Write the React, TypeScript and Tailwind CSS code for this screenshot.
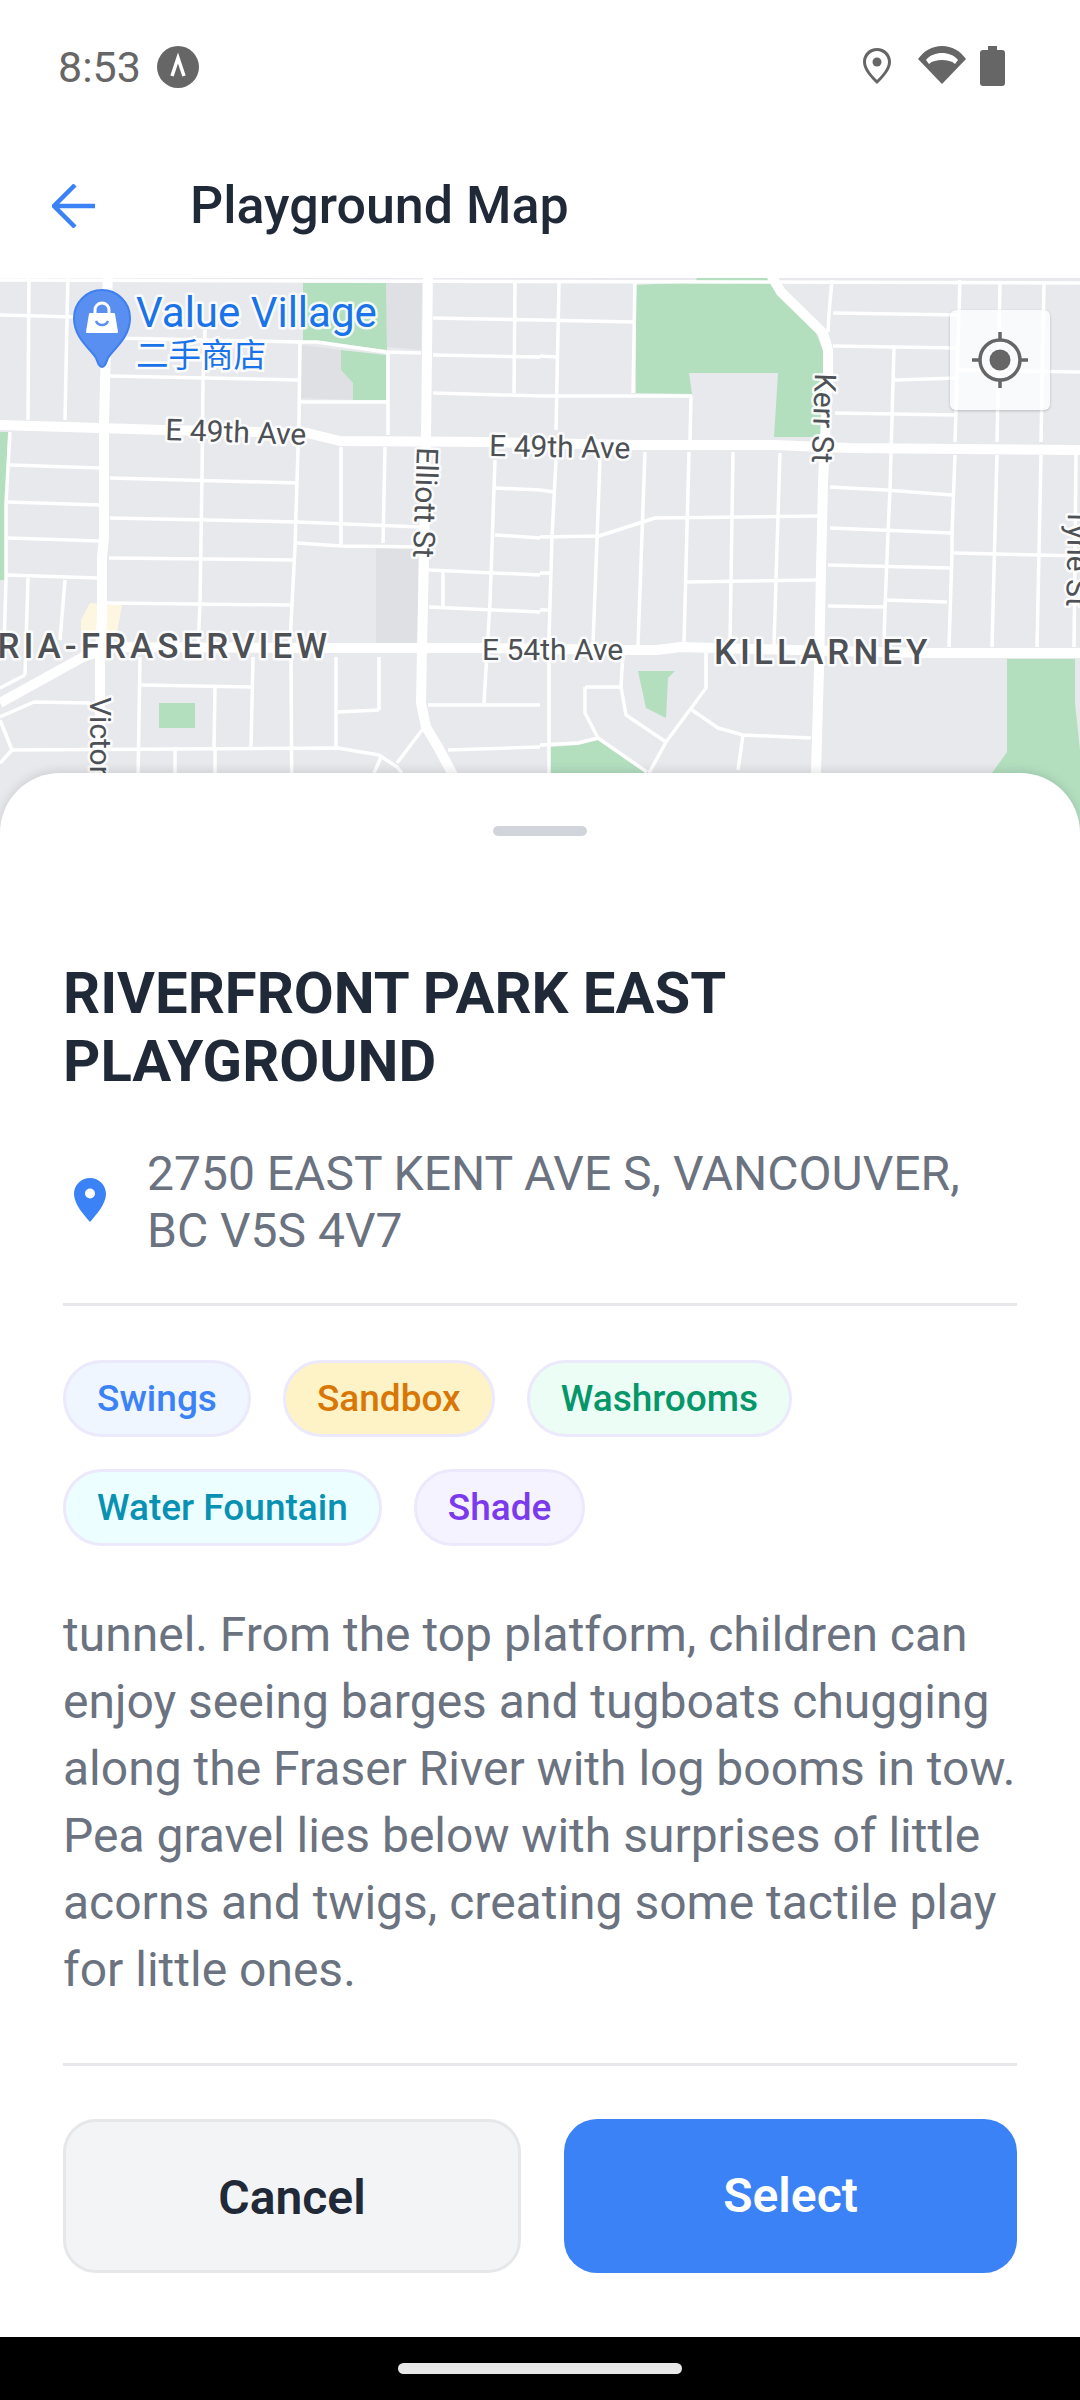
const majorRoads = [
  '108,270 104,423 104,537 102,557 102,617 100,657 100,840',
  '0,425 165,430 307,433 340,441 490,442 633,445 761,445 774,445 850,448 1080,450',
  '97,647 328,648 483,648 623,650 657,650 681,647 714,648 926,653 1080,653',
  '97,652 83,657 0,703',
  '428,270 426,437 424,557 422,647 421,703 426,727 438,747 452,773 470,840',
  '768,270 781,292 823,333 828,350 828,373 823,483 821,570 819,670 814,840',
];

const minorRoads = [
  '29,270 28,420', '68,270 65,420', '205,330 203,380 202,477 200,603 198,647',
  '300,342 299,420 298,450 297,480 295,547 290,643', '291,653 292,840', '388,353 388,435',
  '341,447 341,547', '385,447 383,543', '515,283 514,393', '495,460 490,603 484,703',
  '443,572 443,607', '10,432 6,503 6,580 4,647', '28,578 25,675', '65,580 60,640',
  '140,657 137,840', '215,687 214,747', '253,657 251,747', '336,657 336,747', '379,657 379,710',
  '175,747 175,840', '215,747 215,840', '0,315 76,317', '110,338 300,342 317,342 386,352 421,353',
  '110,376 298,380', '300,402 388,402', '10,465 100,468', '8,502 100,505', '8,538 100,541',
  '7,575 98,578', '110,478 297,483', '110,518 297,522 421,527', '297,543 341,546 421,547',
  '109,558 293,560', '107,603 290,605', '433,318 540,320', '433,355 540,357', '433,393 540,396',
  '495,488 540,490', '495,535 540,538', '429,570 540,575', '429,607 540,612', '428,705 540,705',
  '141,685 252,687', '0,717 34,702 90,703', '0,720 12,750 338,748 379,755 397,767 402,773',
  '12,750 0,763', '338,712 379,710', '397,763 422,730', '381,757 374,773', '448,750 540,747',
  '0,688 25,675', '0,280 1080,283',
  '559,283 556,430', '556,460 552,537 549,637 549,840', '635,283 633,393', '540,320 633,322',
  '540,356 557,357', '540,396 692,396', '691,396 690,440', '645,452 638,645', '600,460 593,645',
  '689,452 684,643', '733,452 730,645', '780,453 774,645', '540,490 554,492',
  '540,537 599,536 655,518 818,516', '687,582 816,580', '540,573 550,573', '540,610 550,610',
  '832,280 829,313 828,332', '833,313 959,315', '833,346 957,348', '957,370 1080,372',
  '894,348 890,490 888,533 885,607 884,645', '895,380 959,378', '835,413 955,415',
  '960,280 955,442', '955,455 952,533 952,553 949,647', '1000,283 997,442', '997,455 992,647',
  '1044,283 1041,442', '1041,455 1037,647', '1076,455 1074,647', '830,487 885,490 952,495',
  '830,528 952,533', '828,565 950,568', '828,606 885,607', '885,600 947,602', '954,553 1080,556',
  '623,653 621,687 626,715 666,742 649,773', '585,687 621,687', '585,687 585,713 598,738 647,772',
  '540,745 578,743 598,738', '706,653 706,688 666,742', '692,710 718,728 743,735 811,738',
  '743,735 738,770',
];

const parks = [
  '303,283 386,283 387,350 319,341 303,341',
  '341,350 386,355 386,400 353,400 353,383 341,370',
  '0,432 8,432 5,503 5,580 0,580',
  '159,703 195,703 195,728 159,728',
  '636,285 695,282 697,278 768,278 778,293 816,333 823,350 824,437 774,437 778,373 689,373 692,394 636,393',
  '638,671 675,671 668,678 666,718 646,708',
  '1007,659 1075,659 1075,703 1080,750 1080,840 970,840 992,773 1007,752',
  '550,747 578,745 598,740 644,772 660,840 550,840',
];

const buildings = [
  '386,283 422,283 421,350 387,347',
  '302,345 341,350 341,370 353,383 353,400 300,398',
  '376,548 418,548 418,643 376,643',
];

const tags = [
  { label: 'Swings', box: 'bg-[#eff6ff]', text: 'text-[#3b82f6]' },
  { label: 'Sandbox', box: 'bg-[#fef3c7]', text: 'text-[#d97706]' },
  { label: 'Washrooms', box: 'bg-[#ecfdf5]', text: 'text-[#059669]' },
  { label: 'Water Fountain', box: 'bg-[#ecfeff]', text: 'text-[#0891b2]' },
  { label: 'Shade', box: 'bg-[#f5f3ff]', text: 'text-[#7c3aed]' },
];

function MapLabel({ x, y, rotate = 0, size = 30, spacing = 0, weight = 400, fill = '#4d5156', anchor = 'start', children }: {
  x: number;
  y: number;
  rotate?: number;
  size?: number;
  spacing?: number;
  weight?: number;
  fill?: string;
  anchor?: 'start' | 'end';
  children: React.ReactNode;
}) {
  return (
    <text
      x={x}
      y={y}
      transform={`rotate(${rotate} ${x} ${y})`}
      fontSize={size}
      fontWeight={weight}
      letterSpacing={spacing}
      textAnchor={anchor}
      fill={fill}
      stroke="#ffffff"
      strokeOpacity={0.85}
      strokeWidth={5}
      strokeLinejoin="round"
      paintOrder="stroke"
    >
      {children}
    </text>
  );
}

function MapView() {
  return (
    <div className="relative h-[555px] w-full overflow-hidden bg-[#e8e9ed]">
      <svg className="block h-full w-full" viewBox="0 278 1080 555">
        <polygon points="90,603 122,605 117,633 81,633 81,620" fill="#fdf7e2" />
        {buildings.map((points) => (
          <polygon key={points} points={points} fill="#dfe0e4" />
        ))}
        {parks.map((points) => (
          <polygon key={points} points={points} fill="#b3dfbf" />
        ))}
        {minorRoads.map((points) => (
          <polyline key={points} points={points} fill="none" stroke="#ffffff" strokeWidth={3.5} strokeLinejoin="round" />
        ))}
        {majorRoads.map((points) => (
          <polyline key={points} points={points} fill="none" stroke="#ffffff" strokeWidth={10} strokeLinejoin="round" />
        ))}

        <path d="M102 367c-3 0-4-4-6-9-4-8-22-19-22-40a28 28 0 0 1 56 0c0 21-18 32-22 40-2 5-3 9-6 9z" fill="#5a8ff2" stroke="#3f7fee" strokeWidth={2} />
        <path d="M90 314h24l3 18H87z" fill="#ffffff" stroke="#ffffff" strokeWidth={2} strokeLinejoin="round" />
        <path d="M95 314v-4a7 7 0 0 1 14 0v4" fill="none" stroke="#ffffff" strokeWidth={3} />
        <path d="M96 321a6.500 6.500 0 0 0 12 0" fill="none" stroke="#5a8ff2" strokeWidth={2.5} />

        <MapLabel x={136} y={327} size={42} fill="#1a73e8">Value Village</MapLabel>
        <text x={136} y={367} fontSize={32.500} fill="#1a73e8" stroke="#ffffff" strokeOpacity={0.85} strokeWidth={5} paintOrder="stroke" className="font-['Noto_Sans_CJK_SC',sans-serif]">二手商店</text>
        <MapLabel x={165} y={440} rotate={2}>E 49th Ave</MapLabel>
        <MapLabel x={489} y={456} rotate={1}>E 49th Ave</MapLabel>
        <MapLabel x={482} y={660}>E 54th Ave</MapLabel>
        <MapLabel x={331} y={658} size={35} spacing={4} weight={500} anchor="end">RIA-FRASERVIEW</MapLabel>
        <MapLabel x={714} y={664} size={35} spacing={4} weight={500}>KILLARNEY</MapLabel>
        <MapLabel x={417} y={447} rotate={92}>Elliott St</MapLabel>
        <MapLabel x={815} y={373} rotate={92}>Kerr St</MapLabel>
        <MapLabel x={90} y={697} rotate={90}>Victoria Dr</MapLabel>
        <MapLabel x={1068} y={508} rotate={91}>Tyne St</MapLabel>
      </svg>

      <div className="absolute left-[950px] top-[32px] flex h-[100px] w-[100px] items-center justify-center rounded-[6px] bg-white/75 shadow-[0_1px_3px_rgba(0,0,0,0.2)]">
        <svg width="58" height="58" viewBox="0 0 58 58">
          <circle cx="29" cy="29" r="20" fill="none" stroke="#666666" strokeWidth="3.500" />
          <circle cx="29" cy="29" r="10.500" fill="#666666" />
          <path d="M29 1v8M29 49v8M1 29h8M49 29h8" stroke="#666666" strokeWidth="3.500" />
        </svg>
      </div>
    </div>
  );
}

export default function App() {
  return (
    <div className="flex h-[2400px] w-[1080px] flex-col overflow-hidden bg-white font-['Roboto',sans-serif]">
      <div className="flex h-[133px] items-start justify-between pl-[58px] pr-[75px] pt-[46px] text-[#666666]">
        <div className="flex items-center gap-[16px]">
          <span className="text-[43px] leading-[42px]">8:53</span>
          <svg width="42" height="42" viewBox="0 0 42 42">
            <circle cx="21" cy="21" r="21" fill="#666666" />
            <path d="M15 30l6-18 6 18" fill="none" stroke="#ffffff" strokeWidth="3.500" />
          </svg>
        </div>
        <div className="flex items-start">
          <svg width="28" height="36" viewBox="0 0 28 36" className="mt-[2px]">
            <path fillRule="evenodd" fill="#666666" d="M14 0C6 0 0 6 0 14c0 8 8 16 14 22 6-6 14-14 14-22C28 6 22 0 14 0zm0 3c6 0 11 5 11 11 0 6-6 13-11 18C9 27 3 20 3 14 3 8 8 3 14 3z" />
            <circle cx="14" cy="14" r="4.500" fill="#666666" />
          </svg>
          <svg width="48" height="38" viewBox="0 0 48 38" className="ml-[27px]">
            <path fill="#666666" d="M24 38L0 13C6 5 14 0 24 0s18 5 24 13z" />
            <path fill="#ffffff" d="M8 14C12 9 18 7 24 7s12 2 16 7l-3 4c-3-3-8-4-13-4s-10 1-13 4z" />
          </svg>
          <svg width="25" height="40" viewBox="0 0 25 40" className="ml-[14px]">
            <path fill="#666666" d="M8 0h9v4h5a3 3 0 0 1 3 3v30a3 3 0 0 1-3 3H3a3 3 0 0 1-3-3V7a3 3 0 0 1 3-3h5z" />
          </svg>
        </div>
      </div>

      <div className="flex h-[145px] items-center gap-[95px] pl-[52px]">
        <svg width="43" height="44" viewBox="0 0 43 44">
          <path d="M43 22H3M23 1L2 22l21 21" fill="none" stroke="#3b82f6" strokeWidth="4.500" />
        </svg>
        <h1 className="text-[52px] font-medium leading-[60px] text-[#1f2937]">Playground Map</h1>
      </div>

      <MapView />

      <div className="relative z-10 -mt-[60px] flex flex-1 flex-col rounded-t-[60px] bg-white px-[63px] shadow-[0_-3px_10px_rgba(0,0,0,0.1)]">
        <div className="mx-auto mt-[53px] h-[10px] w-[94px] shrink-0 rounded-[5px] bg-[#d1d5db]" />
        <h2 className="mt-[123px] text-[58px] font-bold leading-[68px] text-[#1f2937]">RIVERFRONT PARK EAST PLAYGROUND</h2>
        <div className="mt-[50px] flex items-center">
          <svg width="32" height="44" viewBox="0 0 32 44" className="mb-[5px] ml-[11px] mr-[41px] shrink-0">
            <path fillRule="evenodd" fill="#3b82f6" d="M16 0C7 0 0 7 0 16c0 10 10 21 16 28 6-7 16-18 16-28C32 7 25 0 16 0zm0 10.500a5 5 0 1 1 0 10 5 5 0 0 1 0-10z" />
          </svg>
          <p className="text-[48px] leading-[57px] text-[#6b7280]">2750 EAST KENT AVE S, VANCOUVER, BC V5S 4V7</p>
        </div>
        <div className="mt-[44px] h-[3px] shrink-0 bg-[#e5e7eb]" />
        <div className="mt-[54px] flex flex-wrap gap-x-[32px] gap-y-[32px]">
          {tags.map((tag) => (
            <span key={tag.label} className={`flex h-[77px] items-center rounded-full border-[3px] border-[#ebe9fb] px-[31px] text-[37px] font-medium ${tag.box} ${tag.text}`}>
              {tag.label}
            </span>
          ))}
        </div>
        <p className="mt-[55px] text-[48px] leading-[67px] text-[#6b7280]">
          tunnel. From the top platform, children can enjoy seeing barges and tugboats chugging along the Fraser River with log booms in tow. Pea gravel lies below with surprises of little acorns and twigs, creating some tactile play for little ones.
        </p>
        <div className="mt-[60px] h-[3px] shrink-0 bg-[#e5e7eb]" />
        <div className="mt-[53px] flex gap-[43px]">
          <button className="flex h-[154px] w-[458px] items-center justify-center rounded-[33px] border-[3px] border-[#e5e7eb] bg-[#f3f4f6] pt-[4px] text-[48px] font-semibold text-[#1f2937]">Cancel</button>
          <button className="flex h-[154px] w-[453px] items-center justify-center rounded-[33px] bg-[#3b82f6] text-[48px] font-semibold text-white">Select</button>
        </div>
      </div>

      <div className="relative z-10 flex h-[63px] shrink-0 items-start justify-center bg-black pt-[26px]">
        <div className="h-[11px] w-[284px] rounded-full bg-[#e8e8e8]" />
      </div>
    </div>
  );
}
